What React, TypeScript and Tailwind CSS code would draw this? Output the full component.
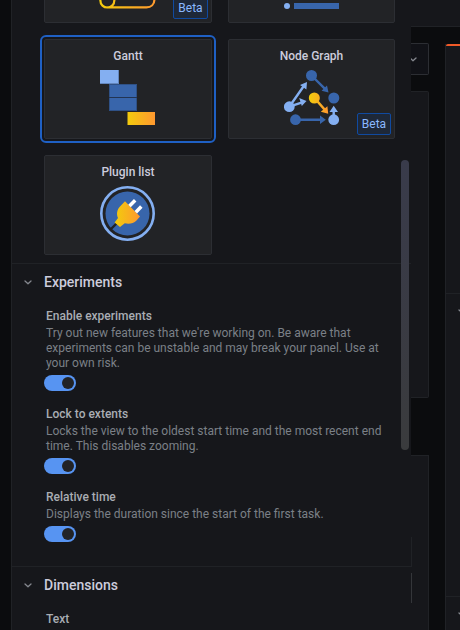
import React from 'react';

function Card({ title, beta, selected, children }: { title: string; beta?: boolean; selected?: boolean; children: React.ReactNode }) {
  return (
    <div
      className={
        'relative flex h-[100px] flex-col items-center rounded-[2px] border border-[#2c2e33] bg-[#222326] pt-2 ' +
        (selected ? 'outline-2 outline-offset-2 outline-[#1f60c4]' : '')
      }
    >
      <div className="text-[12px] leading-4 font-medium text-[#ccccdc]">{title}</div>
      <div className="mt-[6px] h-[56px] w-[56px]">{children}</div>
      {beta && (
        <div className="absolute right-[3px] bottom-[3px] flex h-[22px] w-[34px] items-center justify-center rounded-[2px] border border-[#104aa0] bg-[#1e2838] text-[12px] text-[#8ab8ff]">
          Beta
        </div>
      )}
    </div>
  );
}

function Chevron() {
  return (
    <svg width="8" height="5" viewBox="0 0 8 5" fill="none" stroke="#85888f" strokeWidth="1.3" strokeLinecap="round" strokeLinejoin="round">
      <path d="M1 1 L4 3.8 L7 1" />
    </svg>
  );
}

function SectionHeader({ title }: { title: string }) {
  return (
    <div className="flex h-9 items-center border-t border-[#202226] pl-3">
      <div className="flex w-5 items-center pt-px">
        <Chevron />
      </div>
      <div className="text-[14px] leading-5 font-medium text-[#ccccdc]">{title}</div>
    </div>
  );
}

function Option({ label, lines }: { label: string; lines: string[] }) {
  return (
    <div>
      <div className="pl-[2px] text-[12px] leading-[15px] font-medium text-[#a9adb3]">{label}</div>
      <div className="mt-[2px] pl-[2px] text-[12px] leading-[15px] text-[#7b8087]">
        {lines.map((l) => (
          <div key={l} className="whitespace-nowrap">{l}</div>
        ))}
      </div>
      <div className="mt-1 flex h-4 w-8 items-center justify-end rounded-full bg-[#5794f2] pr-[2px]">
        <div className="h-3 w-3 rounded-full bg-[#222326]" />
      </div>
    </div>
  );
}

function GanttIcon() {
  return (
    <svg width="56" height="56" viewBox="0 0 56 56">
      <defs>
        <linearGradient id="bar" x1="0" x2="1">
          <stop offset="0" stopColor="#f2cc0c" />
          <stop offset="1" stopColor="#ff9830" />
        </linearGradient>
      </defs>
      <rect x="0" y="0" width="19" height="14" fill="#6386bd" />
      <rect x="0" y="0" width="18" height="13" fill="#84aff1" />
      <rect x="9" y="14" width="28" height="27" fill="#2f5186" />
      <rect x="10" y="15" width="26" height="12" fill="#3865ab" />
      <rect x="10" y="28" width="26" height="12" fill="#3865ab" />
      <rect x="9" y="27" width="28" height="1" fill="#223453" />
      <rect x="27" y="42" width="28" height="13" fill="url(#bar)" />
      <rect x="27" y="42" width="1" height="13" fill="#8a7519" />
    </svg>
  );
}

function NodeGraphIcon() {
  return (
    <svg width="56" height="56" viewBox="0 0 56 56">
      <defs>
        <linearGradient id="node" gradientUnits="userSpaceOnUse" x1="25" y1="0" x2="44" y2="0">
          <stop offset="0" stopColor="#f2cc0c" />
          <stop offset="1" stopColor="#ff9830" />
        </linearGradient>
      </defs>
      <g fill="#3865ab" stroke="none">
        <circle cx="27.5" cy="5.5" r="5.5" />
        <circle cx="49.8" cy="28" r="5.5" />
        <circle cx="11.5" cy="49.7" r="5.4" />
        <path d="M44.5 22.4 L43 15.4 L37.6 20.8 Z M41.8 49.7 L36 45.4 V54 Z" />
      </g>
      <g stroke="#3865ab" strokeWidth="2.4">
        <path d="M27.5 5.5 L41.5 19.3 M11 49.7 H37" />
      </g>
      <g fill="#84aff1">
        <circle cx="5.3" cy="36.7" r="5.4" />
        <circle cx="49.7" cy="49.7" r="5.4" />
        <path d="M23 12 L22.4 19.4 L16 15 Z M22.5 31 L15.2 28 L17.8 36 Z M49.7 35.8 L45.5 42 H54 Z" />
      </g>
      <path d="M5.3 36.7 L19.8 16 M5.3 36.7 L17.5 32.7 M49.7 49 V40" stroke="#84aff1" strokeWidth="2.4" />
      <circle cx="30.3" cy="28" r="5.5" fill="url(#node)" />
      <path d="M30.5 28 L41 40" stroke="url(#node)" strokeWidth="2.6" />
      <path d="M44.2 43.8 L43.4 36.2 L36.8 41.8 Z" fill="url(#node)" />
    </svg>
  );
}

function PluginIcon() {
  return (
    <svg width="56" height="56" viewBox="0 0 56 56">
      <defs>
        <linearGradient id="plug" gradientUnits="userSpaceOnUse" x1="15" y1="0" x2="40" y2="0">
          <stop offset="0" stopColor="#f2cc0c" />
          <stop offset="1" stopColor="#ff9830" />
        </linearGradient>
      </defs>
      <circle cx="27.5" cy="27.5" r="26.2" fill="none" stroke="#84aff1" strokeWidth="2.6" />
      <circle cx="27.5" cy="27.5" r="22" fill="#3865ab" />
      <path d="M18 36 L10.5 43.5" stroke="#222326" strokeWidth="2.4" />
      <path
        d="M25 15.2 L40 30.5 L36.5 34.4 C33.5 37.4 29 38.3 24.8 37.2 L20 41 L14.6 36.4 L18 32 C16.3 28 17 23.7 20 20.5 Z"
        fill="url(#plug)"
      />
      <path d="M29.5 20 L35.2 14.3 M35.8 26.2 L41.3 20.6" stroke="#ffffff" strokeWidth="3.5" />
    </svg>
  );
}

export default function App() {
  return (
    <div className="flex h-[630px] w-[460px] overflow-hidden bg-[#0b0c0e] font-[Roboto,sans-serif]">
      <div className="w-3 shrink-0 border-r border-[#202226]" />

      <main className="relative h-[630px] w-[399px] shrink-0 overflow-hidden bg-[#16171b]">
        <div className="-mt-[77px] grid grid-cols-[168px_167px] gap-4 pl-8">
          <div className="relative h-[100px] rounded-[2px] border border-[#2c2e33] bg-[#222326]">
            <svg className="absolute top-[65px] left-[54px]" width="58" height="22" viewBox="0 0 58 22" fill="none">
              <defs>
                <linearGradient id="scroll" gradientUnits="userSpaceOnUse" x1="0" y1="0" x2="58" y2="0">
                  <stop offset="0" stopColor="#f2cc0c" />
                  <stop offset="1" stopColor="#ff9830" />
                </linearGradient>
              </defs>
              <path
                d="M15.4 0 V11 C15.4 21 1.3 21 1.3 11 V0 M8.3 18.4 H47.5 C52 18.4 55.4 15.5 55.4 10.5"
                stroke="url(#scroll)"
                strokeWidth="2.2"
              />
            </svg>
            <div className="absolute right-[3px] bottom-[3px] flex h-[22px] w-[35px] items-center justify-center rounded-[2px] border border-[#104aa0] bg-[#1e2838] text-[12px] text-[#8ab8ff]">
              Beta
            </div>
          </div>
          <div className="flex h-[100px] items-end gap-1 rounded-[2px] border border-[#2c2e33] bg-[#222326] pb-[13px] pl-[55px]">
            <div className="h-[6px] w-[6px] rounded-full bg-[#84aff1]" />
            <div className="h-[6px] w-[45px] bg-[#3865ab]" />
          </div>
          <Card title="Gantt" selected>
            <GanttIcon />
          </Card>
          <Card title="Node Graph" beta>
            <NodeGraphIcon />
          </Card>
          <Card title="Plugin list">
            <PluginIcon />
          </Card>
        </div>

        <section className="mt-2">
          <SectionHeader title="Experiments" />
          <div className="flex flex-col gap-4 pt-[10px] pb-6 pl-8">
            <Option
              label="Enable experiments"
              lines={["Try out new features that we're working on. Be aware that", 'experiments can be unstable and may break your panel. Use at', 'your own risk.']}
            />
            <Option
              label="Lock to extents"
              lines={['Locks the view to the oldest start time and the most recent end', 'time. This disables zooming.']}
            />
            <Option label="Relative time" lines={['Displays the duration since the start of the first task.']} />
          </div>
        </section>

        <section>
          <SectionHeader title="Dimensions" />
          <div className="mt-[10px] pl-[34px] text-[12px] leading-[15px] font-medium text-[#a9adb3]">Text</div>
        </section>

        <div className="absolute top-[160px] left-[389px] h-[290px] w-2 rounded-full bg-linear-to-b from-[#393b4b] to-[#3a3b3d]" />
      </main>

      <div className="flex w-[34px] shrink-0 flex-col">
        <div className="h-[27px] border-b border-[#202226] bg-[#16171b]" />
        <div className="mt-4 flex h-8 w-[18px] items-center overflow-hidden rounded-r-[2px] border-y border-r border-[#2c2e33] bg-[#111217]">
          <div className="-ml-[2px]">
            <Chevron />
          </div>
        </div>
        <div className="mt-4 h-[307px] w-[18px] rounded-r-[2px] border-y border-r border-[#202226] bg-[#16171b]" />
        <div className="mt-[57px] h-[175px] w-[18px] border-t border-r border-[#202226] bg-[#16171b]">
          <div className="mt-[81px] h-[30px] w-px bg-[#202226]" />
          <div className="mt-[6px] h-[30px] w-px bg-[#34363a]" />
        </div>
      </div>

      <div className="flex w-[15px] shrink-0 flex-col">
        <div className="h-[27px] border-b border-[#202226] bg-[#16171b]" />
        <div className="mt-[17px] flex-1 border-l border-[#202226] bg-[#16171b]">
          <div className="h-[2px] rounded-tl-[2px] bg-[#f05a28]" />
          <div className="mt-[247px] h-[303px] overflow-hidden border-t border-[#202226] pt-[15px] pl-3">
            <Chevron />
          </div>
          <div className="h-[34px] overflow-hidden border-t border-[#202226] pt-[15px] pl-3">
            <Chevron />
          </div>
        </div>
      </div>
    </div>
  );
}
